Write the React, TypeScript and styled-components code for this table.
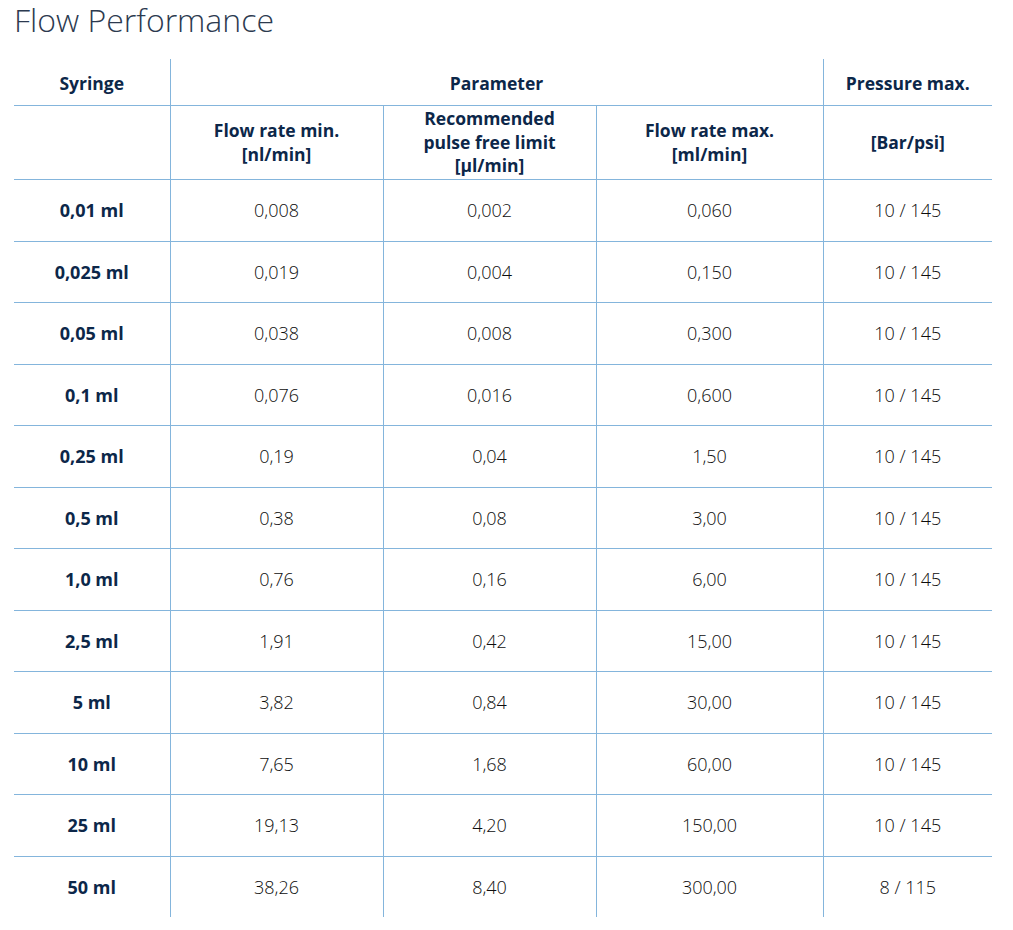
import React from "react";
import styled, { createGlobalStyle } from "styled-components";

const GlobalStyle = createGlobalStyle`
  body {
    margin: 0;
    background: #ffffff;
    font-family: "Open Sans", "Liberation Sans", sans-serif;
  }
`;

const LINE = "#84b5dc";
const NAVY = "#0c2749";

const Page = styled.div`
  padding: 1px 21px 0 14px;
`;

const Title = styled.h1`
  margin: 0 0 20px 0;
  font-size: 32px;
  line-height: 38px;
  font-weight: 300;
  color: #2c3a4f;
`;

const Table = styled.table`
  width: 978px;
  border-collapse: collapse;
  table-layout: fixed;
`;

const Head = styled.th<{ $h: number; $top?: number }>`
  height: ${(p) => p.$h}px;
  padding: ${(p) => p.$top ?? 0}px 4px 0;
  font-size: 17.5px;
  line-height: 23.5px;
  font-weight: 700;
  color: ${NAVY};
  text-align: center;
  vertical-align: middle;
  border: 1px solid ${LINE};
  border-top: none;
  &:first-child {
    border-left: none;
  }
  &:last-child {
    border-right: none;
  }
`;

const Row = styled.tr`
  &:last-child td {
    border-bottom: none;
  }
`;

const Cell = styled.td<{ $label?: boolean }>`
  height: 60.5px;
  padding: 0;
  font-size: 18px;
  font-weight: ${(p) => (p.$label ? 700 : 300)};
  color: ${(p) => (p.$label ? NAVY : "#0d0d0d")};
  text-align: center;
  vertical-align: middle;
  border: 1px solid ${LINE};
  &:first-child {
    border-left: none;
  }
  &:last-child {
    border-right: none;
  }
`;

const rows: [string, string, string, string, string][] = [
  ["0,01 ml", "0,008", "0,002", "0,060", "10 / 145"],
  ["0,025 ml", "0,019", "0,004", "0,150", "10 / 145"],
  ["0,05 ml", "0,038", "0,008", "0,300", "10 / 145"],
  ["0,1 ml", "0,076", "0,016", "0,600", "10 / 145"],
  ["0,25 ml", "0,19", "0,04", "1,50", "10 / 145"],
  ["0,5 ml", "0,38", "0,08", "3,00", "10 / 145"],
  ["1,0 ml", "0,76", "0,16", "6,00", "10 / 145"],
  ["2,5 ml", "1,91", "0,42", "15,00", "10 / 145"],
  ["5 ml", "3,82", "0,84", "30,00", "10 / 145"],
  ["10 ml", "7,65", "1,68", "60,00", "10 / 145"],
  ["25 ml", "19,13", "4,20", "150,00", "10 / 145"],
  ["50 ml", "38,26", "8,40", "300,00", "8 / 115"],
];

export default function App() {
  return (
    <>
      <GlobalStyle />
      <Page>
        <Title>Flow Performance</Title>
        <Table>
          <colgroup>
            <col style={{ width: 156 }} />
            <col style={{ width: 213 }} />
            <col style={{ width: 213 }} />
            <col style={{ width: 227 }} />
            <col style={{ width: 169 }} />
          </colgroup>
          <thead>
            <tr>
              <Head $h={42} $top={4}>
                Syringe
              </Head>
              <Head $h={42} $top={4} colSpan={3}>
                Parameter
              </Head>
              <Head $h={42} $top={4}>
                Pressure max.
              </Head>
            </tr>
            <tr>
              <Head $h={73}></Head>
              <Head $h={73}>
                Flow rate min.
                <br />
                [nl/min]
              </Head>
              <Head $h={73}>
                Recommended
                <br />
                pulse free limit
                <br />
                [µl/min]
              </Head>
              <Head $h={73}>
                Flow rate max.
                <br />
                [ml/min]
              </Head>
              <Head $h={73}>[Bar/psi]</Head>
            </tr>
          </thead>
          <tbody>
            {rows.map((r) => (
              <Row key={r[0]}>
                {r.map((v, i) => (
                  <Cell key={i} $label={i === 0}>
                    {v}
                  </Cell>
                ))}
              </Row>
            ))}
          </tbody>
        </Table>
      </Page>
    </>
  );
}
